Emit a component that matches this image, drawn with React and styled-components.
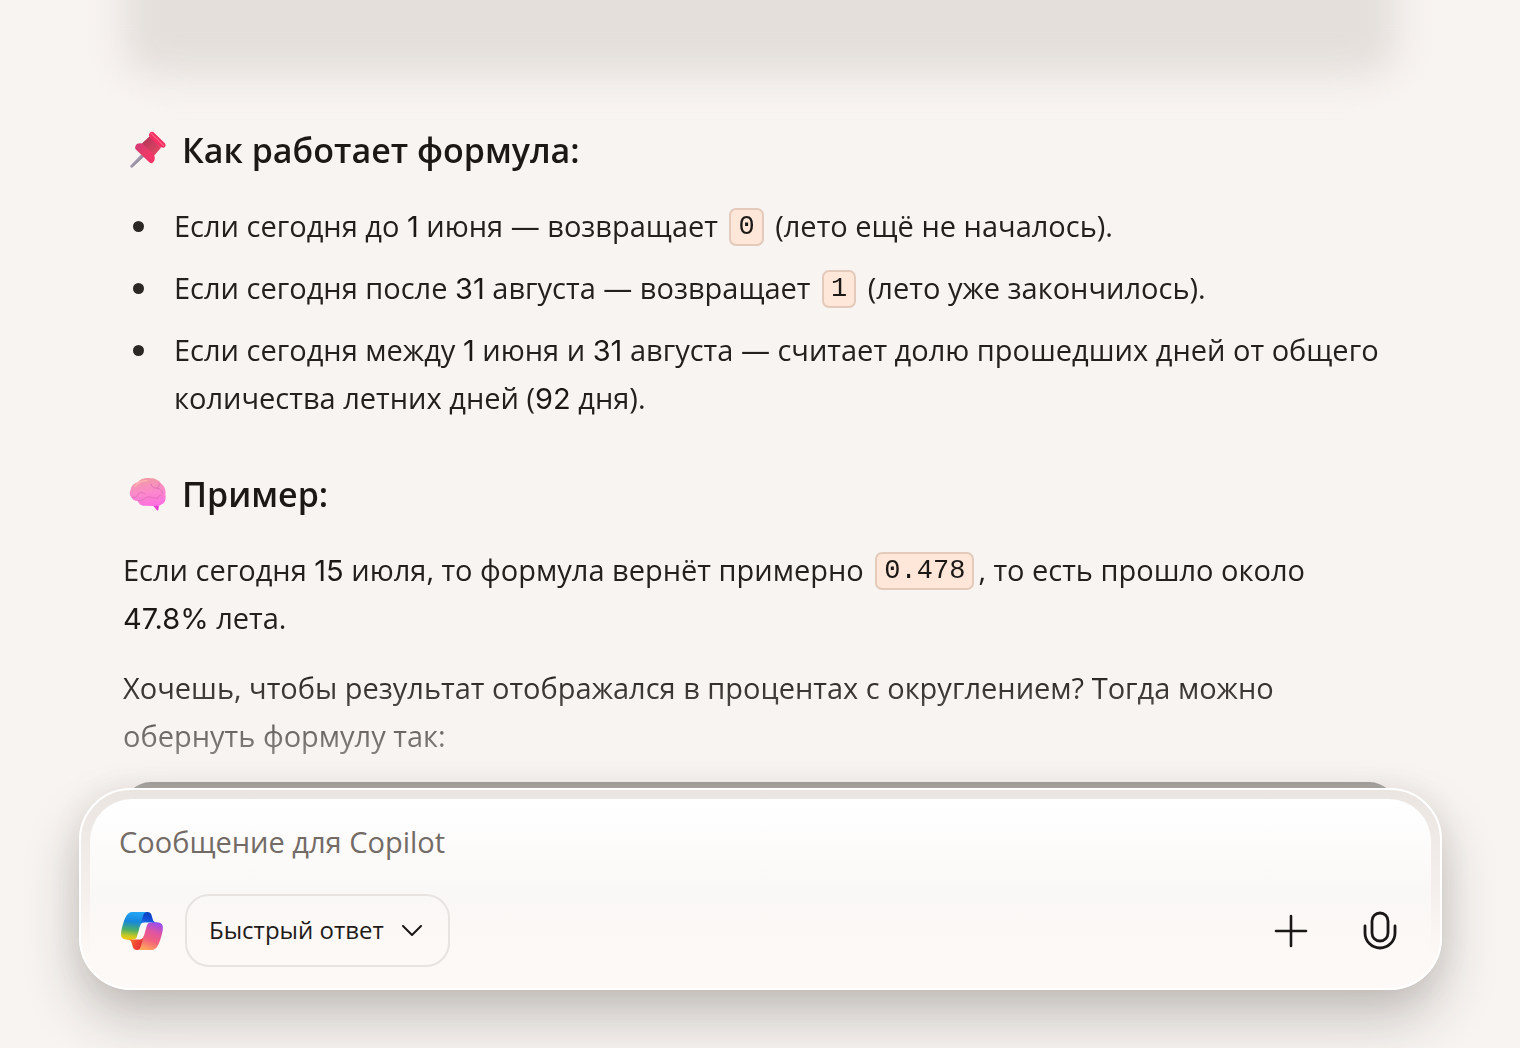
import { useState } from "react";
import styled, { createGlobalStyle } from "styled-components";

const GlobalStyle = createGlobalStyle`
  * {
    box-sizing: border-box;
  }

  body {
    margin: 0;
    background: #f8f4f1;
    color: #24201e;
    font-family: "Open Sans", "Noto Sans", sans-serif;
    font-size: 29px;
    line-height: 48px;
  }
`;

const Page = styled.div`
  display: flex;
  flex-direction: column;
  height: 100vh;
  overflow: hidden;
`;

const Chat = styled.main`
  flex: 1;
  min-height: 0;
  overflow: hidden;
  padding: 0 123px;
  mask-image: linear-gradient(#000 calc(100% - 116px), rgba(0, 0, 0, 0.34));
`;

const BlurredCard = styled.div`
  height: 136px;
  margin: -60px 0 50px;
  border-radius: 32px;
  background: #e4dfdb;
  filter: blur(18px);
`;

const Heading = styled.h2`
  display: flex;
  align-items: center;
  gap: 15px;
  margin: 0 0 28px;
  padding-left: 6px;
  color: #1b1816;
  font-size: 34px;
  font-weight: 600;
  line-height: 48px;
`;

const List = styled.ul`
  display: flex;
  flex-direction: column;
  gap: 14px;
  margin: 0 0 48px;
  padding: 0;
  list-style: none;
`;

const Item = styled.li`
  display: grid;
  grid-template-columns: 11px 1fr;
  gap: 30px;
  padding-left: 10px;

  &::before {
    content: "";
    width: 11px;
    height: 11px;
    margin-top: 19px;
    border-radius: 50%;
    background: #2b2725;
  }
`;

const Text = styled.p`
  margin: 0 0 22px;
`;

const Num = styled.span`
  color: #1b1816;
  font-family: Inter, sans-serif;
  line-height: 1;
`;

const Code = styled.code`
  display: inline-block;
  margin: 0 4px;
  padding: 0 7px;
  border: 2px solid #e3cabb;
  border-radius: 7px;
  background: #fee7d8;
  color: #1b1816;
  font-family: "Liberation Mono", monospace;
  font-size: 27px;
  line-height: 34px;
  vertical-align: 3px;
`;

const CodeBlock = styled.div`
  height: 120px;
  border-radius: 28px;
  background: #1e1b19;
`;

const Composer = styled.form`
  position: relative;
  margin: 0 78px 58px 79px;
  padding: 9px 9px 0;
  border: 2px solid #fff;
  border-radius: 52px;
  background: linear-gradient(#eae5e1, #f4efec 50%, #fdf9f6 85%);
  box-shadow: 0 28px 56px rgba(40, 34, 30, 0.24),
    0 4px 32px rgba(40, 34, 30, 0.08);
`;

const Panel = styled.div`
  padding: 19px 30px 21px 29px;
  border-radius: 42px;
  background: linear-gradient(#fff, #faf8f6 50%, #fdf9f6);
`;

const MessageInput = styled.input`
  display: block;
  width: 100%;
  height: 48px;
  padding: 0;
  border: none;
  background: none;
  color: #1f1c1a;
  font: inherit;

  &::placeholder {
    color: #736b66;
    opacity: 1;
  }
  &:focus {
    outline: none;
  }
`;

const Toolbar = styled.div`
  display: flex;
  align-items: center;
  margin-top: 28px;
`;

const ModeField = styled.label`
  display: grid;
  align-items: center;
  margin-left: 22px;

  > * {
    grid-area: 1 / 1;
  }
  svg {
    justify-self: end;
    margin-right: 28px;
    pointer-events: none;
  }
`;

const ModeSelect = styled.select`
  height: 73px;
  padding: 0 64px 2px 22px;
  border: 2px solid #e6e3e1;
  border-radius: 24px;
  background: transparent;
  color: #1f1c1a;
  appearance: none;
  font-family: inherit;
  font-size: 24px;
`;

const Actions = styled.div`
  display: flex;
  gap: 41px;
  margin-left: auto;
  margin-right: -3px;
`;

const IconButton = styled.button`
  display: flex;
  align-items: center;
  justify-content: center;
  width: 48px;
  height: 48px;
  padding: 0;
  border: none;
  background: none;
  color: #1a1816;
`;

function PinIcon() {
  return (
    <svg width="38" height="38" viewBox="0 0 114 114" aria-hidden="true">
      <defs>
        <linearGradient id="pinStem" x1="0" y1="0" x2="1" y2="1">
          <stop offset="0.35" stopColor="#b9b1c6" />
          <stop offset="0.65" stopColor="#7f7589" />
        </linearGradient>
        <linearGradient id="pinBase" x1="0" y1="0" x2="1" y2="1">
          <stop offset="0" stopColor="#cf3a78" />
          <stop offset="0.5" stopColor="#e83a68" />
          <stop offset="1" stopColor="#ff2f68" />
        </linearGradient>
        <linearGradient id="pinNeck" x1="0" y1="0" x2="1" y2="1">
          <stop offset="0" stopColor="#a93257" />
          <stop offset="1" stopColor="#ee4a66" />
        </linearGradient>
      </defs>
      <path d="M40 66 L48 74 L11 109 C7 112 2 108 5 103 Z" fill="url(#pinStem)" />
      <path d="M62 16 L96 50 L74 76 L36 40 Z" fill="url(#pinNeck)" />
      <path
        d="M62 6 C66 1 72 2 76 6 L107 36 C112 42 110 49 103 50 C98 50 94 49 90 46 L66 23 C60 18 58 11 62 6 Z"
        fill="#f52f66"
      />
      <path
        d="M20 44 C24 36 36 34 45 42 L71 66 C79 75 80 88 71 95 C67 98 63 96 60 93 L22 57 C18 53 17 49 20 44 Z"
        fill="url(#pinBase)"
      />
      <path d="M66 7 L104 44" stroke="#ff5c7c" strokeWidth="4" strokeLinecap="round" />
    </svg>
  );
}

function BrainIcon() {
  return (
    <svg width="38" height="38" viewBox="0 0 114 114" aria-hidden="true">
      <defs>
        <linearGradient id="brainFill" x1="0.4" y1="0" x2="0.6" y2="1">
          <stop offset="0" stopColor="#f09aa4" />
          <stop offset="0.5" stopColor="#fb8acb" />
          <stop offset="1" stopColor="#ff6ee0" />
        </linearGradient>
      </defs>
      <path d="M72 86 L91 84 L88 104 C87 107 84 107 82 104 C79 98 75 95 72 92 Z" fill="#e83bd0" />
      <path
        d="M26 22 C34 11 51 7 64 10 C76 9 90 15 97 26 C107 33 112 48 109 59 C112 72 108 84 98 88 C93 93 84 94 77 93 L44 92 C34 91 29 86 27 78 C16 78 10 75 8 67 C1 62 1 51 5 45 C6 34 14 25 26 22 Z"
        fill="url(#brainFill)"
      />
      <g fill="none" stroke="#e070b6" strokeWidth="3" strokeLinecap="round" strokeLinejoin="round">
        <path d="M8 66 C16 70 22 67 25 61 C28 54 38 50 46 55" />
        <path d="M27 78 C37 78 44 74 51 68 C61 61 74 73 87 69" />
        <path d="M66 28 C68 37 76 40 84 39 C93 41 99 48 101 55" />
        <path d="M84 39 C90 36 92 31 90 25" />
        <path d="M87 69 C89 64 91 60 97 60" />
      </g>
      <path d="M18 34 C25 24 40 17 54 17" fill="none" stroke="#ffb1b1" strokeWidth="5" strokeLinecap="round" />
    </svg>
  );
}

function CopilotLogo() {
  return (
    <svg width="44" height="38" viewBox="0 4 46 40" aria-hidden="true">
      <defs>
        <linearGradient id="foldBlue" x1="0.7" y1="0" x2="0.4" y2="1">
          <stop offset="0" stopColor="#0a3cb8" />
          <stop offset="0.5" stopColor="#1250d8" />
          <stop offset="1" stopColor="#2a95ee" />
        </linearGradient>
        <linearGradient id="foldOrange" x1="0" y1="0.2" x2="1" y2="0.6">
          <stop offset="0" stopColor="#ff8a3c" />
          <stop offset="0.5" stopColor="#f5502f" />
          <stop offset="1" stopColor="#e02a3c" />
        </linearGradient>
        <linearGradient id="ribbonCool" x1="0.45" y1="0" x2="0.35" y2="1">
          <stop offset="0" stopColor="#22a4f5" />
          <stop offset="0.35" stopColor="#1687dc" />
          <stop offset="0.65" stopColor="#4cae68" />
          <stop offset="0.88" stopColor="#c9c922" />
          <stop offset="1" stopColor="#f5c90c" />
        </linearGradient>
        <linearGradient id="ribbonWarm" x1="0.75" y1="0" x2="0.4" y2="1">
          <stop offset="0" stopColor="#9a4df0" />
          <stop offset="0.35" stopColor="#e0559f" />
          <stop offset="0.65" stopColor="#f2617e" />
          <stop offset="1" stopColor="#ffa45c" />
        </linearGradient>
      </defs>
      <path
        d="M34.142 7.325A4.63 4.63 0 0 0 29.7 4H28.35a4.63 4.63 0 0 0-4.554 3.794L21.48 20.407l.575-1.965a4.63 4.63 0 0 1 4.444-3.33h7.853l3.294 1.282 3.175-1.283h-.926a4.63 4.63 0 0 1-4.443-3.325z"
        fill="url(#foldBlue)"
      />
      <path
        d="M14.33 40.656A4.63 4.63 0 0 0 18.779 44h2.87a4.63 4.63 0 0 0 4.629-4.51l.312-12.163-.654 2.233a4.63 4.63 0 0 1-4.443 3.329h-7.919l-2.823-1.532-3.057 1.532h.912a4.63 4.63 0 0 1 4.447 3.344z"
        fill="url(#foldOrange)"
      />
      <path
        d="M29.5 4H13.46c-4.583 0-7.332 6.057-9.165 12.113C2.123 23.29-.72 32.885 7.503 32.885h6.927a4.63 4.63 0 0 0 4.454-3.358C20.36 24.363 22.944 15.371 24.976 8.515 25.75 6 27 4.1 29.5 4z"
        fill="url(#ribbonCool)"
      />
      <path
        d="M18.498 44h16.04c4.582 0 7.332-6.058 9.165-12.115 2.171-7.177 5.013-16.775-3.208-16.775h-6.926a4.63 4.63 0 0 0-4.454 3.359C27.639 23.633 25.055 32.629 23.025 39.485 22.25 42 21 43.9 18.498 44z"
        fill="url(#ribbonWarm)"
      />
    </svg>
  );
}

function App() {
  const [message, setMessage] = useState("");

  return (
    <Page>
      <GlobalStyle />
      <Chat>
        <BlurredCard />
        <Heading>
          <PinIcon />
          Как работает формула:
        </Heading>
        <List>
          <Item>
            <span>
              Если сегодня до <Num>1</Num> июня — возвращает <Code>0</Code> (лето
              ещё не началось).
            </span>
          </Item>
          <Item>
            <span>
              Если сегодня после <Num>31</Num> августа — возвращает{" "}
              <Code>1</Code> (лето уже закончилось).
            </span>
          </Item>
          <Item>
            <span>
              Если сегодня между <Num>1</Num> июня и <Num>31</Num> августа —
              считает долю прошедших дней от общего количества летних дней (
              <Num>92</Num> дня).
            </span>
          </Item>
        </List>
        <Heading>
          <BrainIcon />
          Пример:
        </Heading>
        <Text>
          Если сегодня <Num>15</Num> июля, то формула вернёт примерно{" "}
          <Code>0.478</Code>, то есть прошло около{" "}
          <Num>47.8%</Num>&nbsp;лета.
        </Text>
        <Text>
          Хочешь, чтобы результат отображался в процентах с округлением? Тогда
          можно обернуть формулу так:
        </Text>
        <CodeBlock />
      </Chat>
      <Composer onSubmit={(e) => e.preventDefault()}>
        <Panel>
          <MessageInput
            aria-label="Сообщение для Copilot"
            placeholder="Сообщение для Copilot"
            value={message}
            onChange={(e) => setMessage(e.target.value)}
          />
          <Toolbar>
            <CopilotLogo />
            <ModeField>
              <ModeSelect aria-label="Режим ответа">
                <option>Быстрый ответ</option>
              </ModeSelect>
              <svg width="20" height="12" viewBox="0 0 20 12" fill="none" aria-hidden="true">
                <path
                  d="M1 1 L10 10 L19 1"
                  stroke="#1a1816"
                  strokeWidth="2"
                  strokeLinecap="round"
                  strokeLinejoin="round"
                />
              </svg>
            </ModeField>
            <Actions>
              <IconButton type="button" aria-label="Добавить">
                <svg width="34" height="34" viewBox="0 0 34 34" aria-hidden="true">
                  <path
                    d="M17 2 V32 M2 17 H32"
                    stroke="currentColor"
                    strokeWidth="2.600"
                    strokeLinecap="round"
                  />
                </svg>
              </IconButton>
              <IconButton type="button" aria-label="Голосовой ввод">
                <svg width="34" height="40" viewBox="0 0 34 40" fill="none" aria-hidden="true">
                  <g stroke="currentColor" strokeWidth="2.800" strokeLinecap="round">
                    <rect x="9" y="2" width="16" height="28" rx="8" />
                    <path d="M2 15 V22 A15 15 0 0 0 32 22 V15" />
                  </g>
                </svg>
              </IconButton>
            </Actions>
          </Toolbar>
        </Panel>
      </Composer>
    </Page>
  );
}

export default App;
